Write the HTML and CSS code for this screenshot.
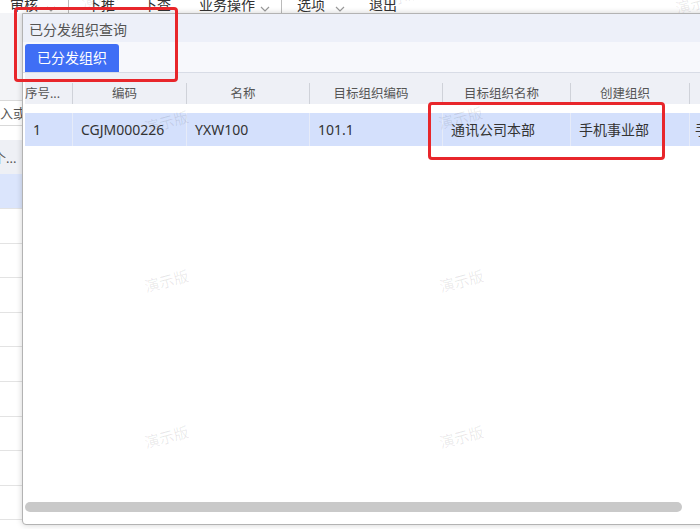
FILE: index.html
```html
<!DOCTYPE html>
<html lang="zh-CN">
<head>
  <meta charset="UTF-8">
  <title>已分发组织查询</title>
  <link rel="stylesheet" href="styles.css">
</head>
<body>
  <div id="app">
    <div class="menubar">
      <div class="menu-items">
        <span class="mi mi-audit">审核</span>
        <svg class="caret caret-audit" viewBox="0 0 10 6"><path d="M1 1l4 4 4-4"/></svg>
        <span class="sep sep-1"></span>
        <span class="mi mi-push">下推</span>
        <span class="mi mi-look">下查</span>
        <span class="mi mi-biz">业务操作</span>
        <svg class="caret caret-biz" viewBox="0 0 10 6"><path d="M1 1l4 4 4-4"/></svg>
        <span class="sep sep-2"></span>
        <span class="mi mi-opt">选项</span>
        <svg class="caret caret-opt" viewBox="0 0 10 6"><path d="M1 1l4 4 4-4"/></svg>
        <span class="mi mi-exit">退出</span>
      </div>
    </div>
    <div class="toolbar"></div>
    <div class="search"><span class="search-text">输入或</span></div>
    <div class="search-gap"></div>
    <div class="list">
      <div class="list-row list-head"><div class="lc"><span class="head-text">个...</span></div><div class="lc"></div><div class="lc"></div><div class="lc"></div><div class="lc"></div><div class="lc"></div><div class="lc"></div><div class="lc"></div><div class="lc"></div></div>
      <div class="list-row selected"><div class="lc"></div><div class="lc"></div><div class="lc"></div><div class="lc"></div><div class="lc"></div><div class="lc"></div><div class="lc"></div><div class="lc"></div><div class="lc"></div></div>
      <div class="list-row"><div class="lc"></div><div class="lc"></div><div class="lc"></div><div class="lc"></div><div class="lc"></div><div class="lc"></div><div class="lc"></div><div class="lc"></div><div class="lc"></div></div>
      <div class="list-row"><div class="lc"></div><div class="lc"></div><div class="lc"></div><div class="lc"></div><div class="lc"></div><div class="lc"></div><div class="lc"></div><div class="lc"></div><div class="lc"></div></div>
      <div class="list-row"><div class="lc"></div><div class="lc"></div><div class="lc"></div><div class="lc"></div><div class="lc"></div><div class="lc"></div><div class="lc"></div><div class="lc"></div><div class="lc"></div></div>
      <div class="list-row"><div class="lc"></div><div class="lc"></div><div class="lc"></div><div class="lc"></div><div class="lc"></div><div class="lc"></div><div class="lc"></div><div class="lc"></div><div class="lc"></div></div>
      <div class="list-row"><div class="lc"></div><div class="lc"></div><div class="lc"></div><div class="lc"></div><div class="lc"></div><div class="lc"></div><div class="lc"></div><div class="lc"></div><div class="lc"></div></div>
      <div class="list-row"><div class="lc"></div><div class="lc"></div><div class="lc"></div><div class="lc"></div><div class="lc"></div><div class="lc"></div><div class="lc"></div><div class="lc"></div><div class="lc"></div></div>
      <div class="list-row"><div class="lc"></div><div class="lc"></div><div class="lc"></div><div class="lc"></div><div class="lc"></div><div class="lc"></div><div class="lc"></div><div class="lc"></div><div class="lc"></div></div>
      <div class="list-row"><div class="lc"></div><div class="lc"></div><div class="lc"></div><div class="lc"></div><div class="lc"></div><div class="lc"></div><div class="lc"></div><div class="lc"></div><div class="lc"></div></div>
      <div class="list-row"><div class="lc"></div><div class="lc"></div><div class="lc"></div><div class="lc"></div><div class="lc"></div><div class="lc"></div><div class="lc"></div><div class="lc"></div><div class="lc"></div></div>
    </div>
    <span class="wm wm-bg1">演示版</span>
    <span class="wm wm-bg2">演示版</span>
    <span class="wm wm-bg3">演示版</span>
  </div>

  <div class="dialog">
    <div class="dlg-title">已分发组织查询</div>
    <div class="tabbar">
      <div class="tab active">已分发组织</div>
    </div>
    <div class="grid">
      <div class="grid-head">
        <div class="gc c-no left">序号...</div>
        <div class="gc c-code">编码</div>
        <div class="gc c-name">名称</div>
        <div class="gc c-tcode">目标组织编码</div>
        <div class="gc c-tname">目标组织名称</div>
        <div class="gc c-org">创建组织</div>
        <div class="gc c-more"></div>
      </div>
      <div class="grid-row selected">
        <div class="gc c-no">1</div>
        <div class="gc c-code">CGJM000226</div>
        <div class="gc c-name">YXW100</div>
        <div class="gc c-tcode">101.1</div>
        <div class="gc c-tname">通讯公司本部</div>
        <div class="gc c-org">手机事业部</div>
        <div class="gc c-more">手机事业部</div>
      </div>
    </div>
    <div class="hscroll"><div class="thumb"></div></div>

    <span class="wm wm-1">演示版</span>
    <span class="wm wm-2">演示版</span>
    <span class="wm wm-3">演示版</span>
    <span class="wm wm-4">演示版</span>
    <span class="wm wm-5">演示版</span>
    <span class="wm wm-6">演示版</span>
  </div>

  <!-- annotation boxes -->
  <div class="mark mark-tab"></div>
  <div class="mark mark-cols"></div>
</body>
</html>
```

FILE: styles.css
```css
html, body, div {
  margin: 0;
  padding: 0;
}

body {
  width: 700px;
  height: 529px;
  overflow: hidden;
  position: relative;
  background: #fff;
  color: #333;
  font-family: "Noto Sans", "Noto Sans CJK SC", sans-serif;
  font-size: 14px;
}

/* background page */
#app {
  position: relative;
  height: 529px;
  overflow: hidden;
}

.menubar {
  height: 13px;
  overflow: hidden;
  background: #fff;
}

.menu-items {
  display: flex;
  align-items: center;
  height: 16px;
  margin-top: -3px;
  padding-left: 10px;
  color: #333;
  font-size: 14px;
  line-height: 16px;
  white-space: nowrap;
}

.caret {
  width: 10px;
  height: 6px;
  margin-top: 8px;
  fill: none;
  stroke: #999;
  stroke-width: 1.2;
}

.sep {
  width: 1px;
  height: 14px;
  margin-top: 4px;
  background: #bbb;
}

.caret-audit { margin-left: 8px; }
.sep-1 { margin-left: 12px; }
.mi-push { margin-left: 18px; }
.mi-look { margin-left: 28px; }
.mi-biz { margin-left: 28px; }
.caret-biz { margin-left: 5px; }
.sep-2 { margin-left: 11px; }
.mi-opt { margin-left: 15px; }
.caret-opt { margin-left: 10px; }
.mi-exit { margin-left: 24px; }

.toolbar {
  height: 87px;
  background: #f3f4f7;
}

.search {
  height: 24px;
  border-top: 1px solid #d9d9d9;
  border-bottom: 1px solid #d9d9d9;
  background: #fff;
  overflow: hidden;
  line-height: 24px;
  font-size: 13px;
  color: #555;
}

.search-text {
  display: block;
  margin-left: -13px;
}

.search-gap {
  height: 14px;
}

.list-row {
  display: grid;
  grid-template-columns: 29px 98px 99px 60px 98px 99px 100px 99px 1fr;
  height: 33.6px;
  border-bottom: 1px solid #e3e3e3;
}

.list-row .lc {
  border-right: 1px solid #e3e3e3;
  overflow: hidden;
}

.list-head {
  height: 34px;
  background: #eef0f5;
  border-bottom: 0;
}

.list-head .lc {
  border-right: 0;
}

.list-row.selected {
  background: #dbe5fc;
  height: 34px;
}

.head-text {
  display: block;
  margin-left: -7px;
  line-height: 36px;
  font-size: 13px;
  color: #555;
  white-space: nowrap;
}

/* watermark */
.wm {
  position: absolute;
  font-size: 15px;
  color: rgba(0, 0, 0, 0.09);
  transform: rotate(-15deg);
  white-space: nowrap;
  pointer-events: none;
  line-height: 18px;
}

.wm-bg1 { left: 81px; top: -12px; }
.wm-bg2 { left: 377px; top: -12px; }
.wm-bg3 { left: 675px; top: -6px; }

/* dialog */
.dialog {
  position: absolute;
  left: 22px;
  top: 13px;
  width: 700px;
  height: 510px;
  border: 1px solid #b3b3b3;
  border-radius: 0 0 0 4px;
  background: #fff;
  box-shadow: 0 0 6px rgba(0, 0, 0, 0.18);
  display: flex;
  flex-direction: column;
  overflow: hidden;
}

.dlg-title {
  height: 22px;
  padding: 6px 0 0 6px;
  background: #edf0f9;
  color: #555;
  font-size: 14px;
  line-height: 20px;
}

.tabbar {
  display: flex;
  align-items: flex-end;
  height: 30px;
  padding-left: 2px;
  background: #f7f8fc;
  border-bottom: 1px solid #d8dce6;
}

.tab {
  width: 94px;
  height: 28px;
  border-radius: 3px 3px 0 0;
  text-align: center;
  line-height: 28px;
  font-size: 14px;
}

.tab.active {
  background: #3f6ef5;
  color: #fff;
}

.grid {
  flex: 1;
  padding-left: 2px;
}

.grid-head {
  display: flex;
  height: 21px;
  padding-top: 10px;
  background: #eef0f6;
  color: #555;
  font-size: 12.5px;
  line-height: 21px;
}

.grid-head .gc {
  border-right: 1px solid #cfd2d9;
  text-align: center;
  padding-right: 10px;
}

.grid-head .gc.left {
  text-align: left;
  padding-right: 0;
}

.grid-head .gc.c-more {
  border-right: 0;
}

.grid-row {
  display: flex;
  height: 33px;
  margin-top: 9px;
  line-height: 33px;
  font-size: 14px;
  color: #333;
}

.grid-row.selected {
  background: #d4e0fc;
}

.grid-row .gc {
  padding-left: 8px;
  border-right: 1px solid #e6ebf8;
}

.gc {
  flex: none;
  box-sizing: border-box;
  overflow: hidden;
  white-space: nowrap;
}

.c-no { width: 48px; }
.c-code { width: 114px; }
.c-name { width: 123px; }
.c-tcode { width: 133px; }
.c-tname { width: 128px; }
.c-org { width: 119px; }
.c-more { width: 120px; }

.grid-row .c-more {
  padding-left: 5px;
}

.hscroll {
  height: 10px;
  padding: 0 0 12px 2px;
}

.hscroll .thumb {
  width: 657px;
  height: 10px;
  border-radius: 5px;
  background: #c9c9c9;
}

.wm-1 { left: 121px; top: 99px; }
.wm-2 { left: 415px; top: 95px; }
.wm-3 { left: 121px; top: 258px; }
.wm-4 { left: 416px; top: 258px; }
.wm-5 { left: 121px; top: 414px; }
.wm-6 { left: 416px; top: 414px; }

/* red annotation boxes */
.mark {
  position: absolute;
  border: 3px solid #e8262b;
  border-radius: 4px;
  pointer-events: none;
}

.mark-tab {
  left: 14px;
  top: 7px;
  width: 158px;
  height: 69px;
}

.mark-cols {
  left: 428px;
  top: 102px;
  width: 231px;
  height: 52px;
}
```
